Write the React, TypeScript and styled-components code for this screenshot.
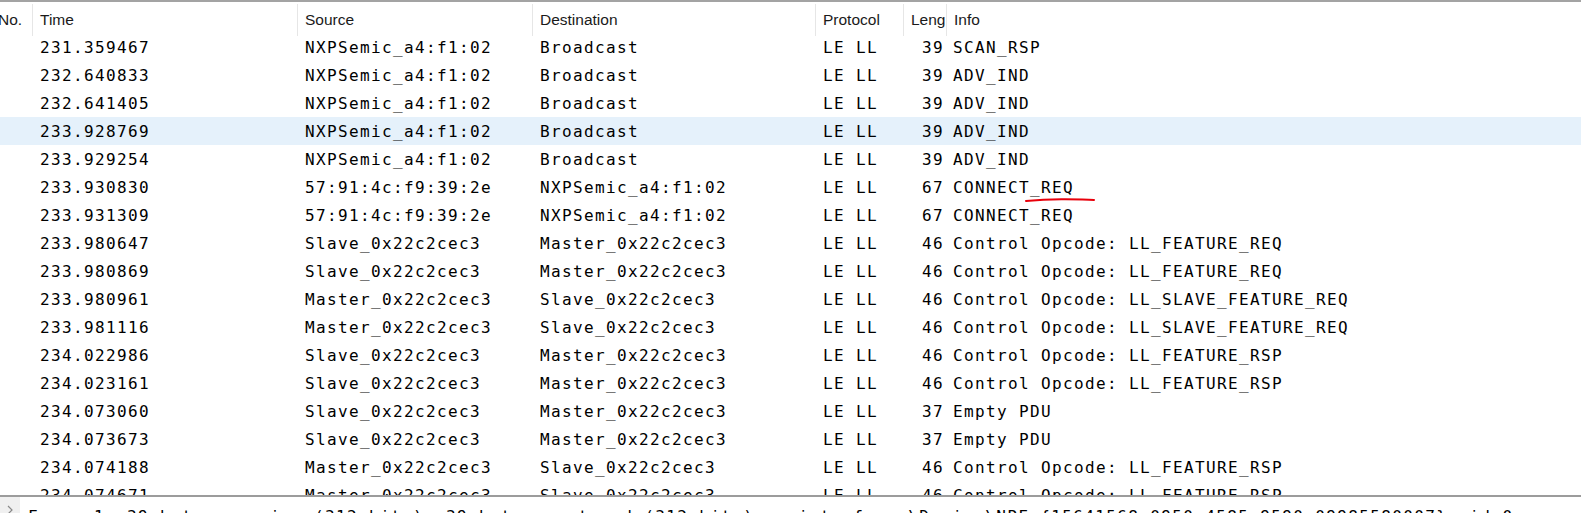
import React from 'react';
import styled, { createGlobalStyle } from 'styled-components';

const GlobalStyle = createGlobalStyle`
  html, body {
    margin: 0;
    padding: 0;
    background: #fff;
    overflow: hidden;
  }
`;

const COLS = '33px 265px 235px 283px 88px 43px 1fr';

const Window = styled.div`
  width: 1581px;
  height: 513px;
  display: flex;
  flex-direction: column;
  overflow: hidden;
  background: #fff;
  border-top: 2px solid #a3a3a3;
  box-sizing: border-box;
`;

const ListPane = styled.div`
  position: relative;
  height: 493px;
  overflow: hidden;
  flex-shrink: 0;
`;

const HeaderRow = styled.div`
  display: grid;
  grid-template-columns: ${COLS};
  height: 31px;
  padding-top: 1px;
  box-sizing: border-box;
`;

const HeaderCell = styled.div<{ $first?: boolean }>`
  font-family: "Liberation Sans", Arial, sans-serif;
  font-size: 15.5px;
  color: #1a1a1a;
  display: flex;
  align-items: center;
  padding-left: ${(p) => (p.$first ? '0' : '7px')};
  margin-left: ${(p) => (p.$first ? '-2px' : '0')};
  border-right: 1px solid #e6e6e6;
  white-space: nowrap;
  overflow: hidden;
  height: 32px;
  margin-top: 1px;
  &:last-child {
    border-right: none;
  }
`;

const Row = styled.div<{ $selected?: boolean }>`
  display: grid;
  grid-template-columns: ${COLS};
  height: 28px;
  align-items: center;
  background: ${(p) => (p.$selected ? '#e5f1fb' : 'transparent')};
`;

const Cell = styled.div<{ $right?: boolean }>`
  font-family: "DejaVu Sans Mono", "Liberation Mono", monospace;
  font-size: 16px;
  letter-spacing: 1.37px;
  color: #000;
  white-space: pre;
  overflow: hidden;
  text-align: ${(p) => (p.$right ? 'right' : 'left')};
  padding: ${(p) => (p.$right ? '0 3px 0 0' : '0 0 0 7px')};
`;

const InfoCell = styled(Cell)`
  padding-left: 6px;
  position: relative;
  overflow: visible;
`;

// red hand-drawn underline laid over the text
const Mark = styled.svg`
  position: absolute;
  left: 78px;
  top: 19px;
  overflow: visible;
`;

const DetailPane = styled.div`
  flex: 1;
  border-top: 2px solid #9c9c9c;
  background: #fff;
  display: flex;
  align-items: flex-start;
  overflow: hidden;
`;

const Expander = styled.div`
  width: 20px;
  height: 100%;
  background: #f0f0f0;
  display: flex;
  justify-content: center;
  padding-top: 8px;
  box-sizing: border-box;
  flex-shrink: 0;
`;

const DetailText = styled.div`
  font-family: "DejaVu Sans Mono", "Liberation Mono", monospace;
  font-size: 16px;
  letter-spacing: 1.37px;
  color: #000;
  white-space: pre;
  padding: 10px 0 0 8px;
`;

type Packet = {
  time: string;
  src: string;
  dst: string;
  len: string;
  info: string;
  selected?: boolean;
  mark?: boolean;
};

const NXP = 'NXPSemic_a4:f1:02';
const MAC = '57:91:4c:f9:39:2e';
const SL = 'Slave_0x22c2cec3';
const MA = 'Master_0x22c2cec3';

const packets: Packet[] = [
  { time: '231.359467', src: NXP, dst: 'Broadcast', len: '39', info: 'SCAN_RSP' },
  { time: '232.640833', src: NXP, dst: 'Broadcast', len: '39', info: 'ADV_IND' },
  { time: '232.641405', src: NXP, dst: 'Broadcast', len: '39', info: 'ADV_IND' },
  { time: '233.928769', src: NXP, dst: 'Broadcast', len: '39', info: 'ADV_IND', selected: true },
  { time: '233.929254', src: NXP, dst: 'Broadcast', len: '39', info: 'ADV_IND' },
  { time: '233.930830', src: MAC, dst: NXP, len: '67', info: 'CONNECT_REQ', mark: true },
  { time: '233.931309', src: MAC, dst: NXP, len: '67', info: 'CONNECT_REQ' },
  { time: '233.980647', src: SL, dst: MA, len: '46', info: 'Control Opcode: LL_FEATURE_REQ' },
  { time: '233.980869', src: SL, dst: MA, len: '46', info: 'Control Opcode: LL_FEATURE_REQ' },
  { time: '233.980961', src: MA, dst: SL, len: '46', info: 'Control Opcode: LL_SLAVE_FEATURE_REQ' },
  { time: '233.981116', src: MA, dst: SL, len: '46', info: 'Control Opcode: LL_SLAVE_FEATURE_REQ' },
  { time: '234.022986', src: SL, dst: MA, len: '46', info: 'Control Opcode: LL_FEATURE_RSP' },
  { time: '234.023161', src: SL, dst: MA, len: '46', info: 'Control Opcode: LL_FEATURE_RSP' },
  { time: '234.073060', src: SL, dst: MA, len: '37', info: 'Empty PDU' },
  { time: '234.073673', src: SL, dst: MA, len: '37', info: 'Empty PDU' },
  { time: '234.074188', src: MA, dst: SL, len: '46', info: 'Control Opcode: LL_FEATURE_RSP' },
  { time: '234.074671', src: MA, dst: SL, len: '46', info: 'Control Opcode: LL_FEATURE_RSP' },
];

const headers = ['No.', 'Time', 'Source', 'Destination', 'Protocol', 'Leng', 'Info'];

export default function App() {
  return (
    <>
      <GlobalStyle />
      <Window>
        <ListPane>
          <HeaderRow>
            {headers.map((h, i) => (
              <HeaderCell key={h} $first={i === 0}>
                {h}
              </HeaderCell>
            ))}
          </HeaderRow>
          {packets.map((p) => (
            <Row key={p.time} $selected={p.selected}>
              <Cell />
              <Cell>{p.time}</Cell>
              <Cell>{p.src}</Cell>
              <Cell>{p.dst}</Cell>
              <Cell>LE LL</Cell>
              <Cell $right>{p.len}</Cell>
              <InfoCell>
                {p.info}
                {p.mark && (
                  <Mark width="70" height="6" viewBox="0 0 70 6">
                    <path
                      d="M1 4 Q 20 2 40 2.2 T 69 3"
                      stroke="#e8000b"
                      strokeWidth="2"
                      fill="none"
                      strokeLinecap="round"
                    />
                  </Mark>
                )}
              </InfoCell>
            </Row>
          ))}
        </ListPane>
        <DetailPane>
          <Expander>
            <svg width="8" height="10" viewBox="0 0 8 10">
              <path d="M2 1 L6 5 L2 9" stroke="#8a8a8a" strokeWidth="1.2" fill="none" />
            </svg>
          </Expander>
          <DetailText>
            {'Frame 1: 39 bytes on wire (312 bits), 39 bytes captured (312 bits) on interface \\Device\\NPF_{15641568-0950-4585-9590-09985580007}, id 0'}
          </DetailText>
        </DetailPane>
      </Window>
    </>
  );
}
